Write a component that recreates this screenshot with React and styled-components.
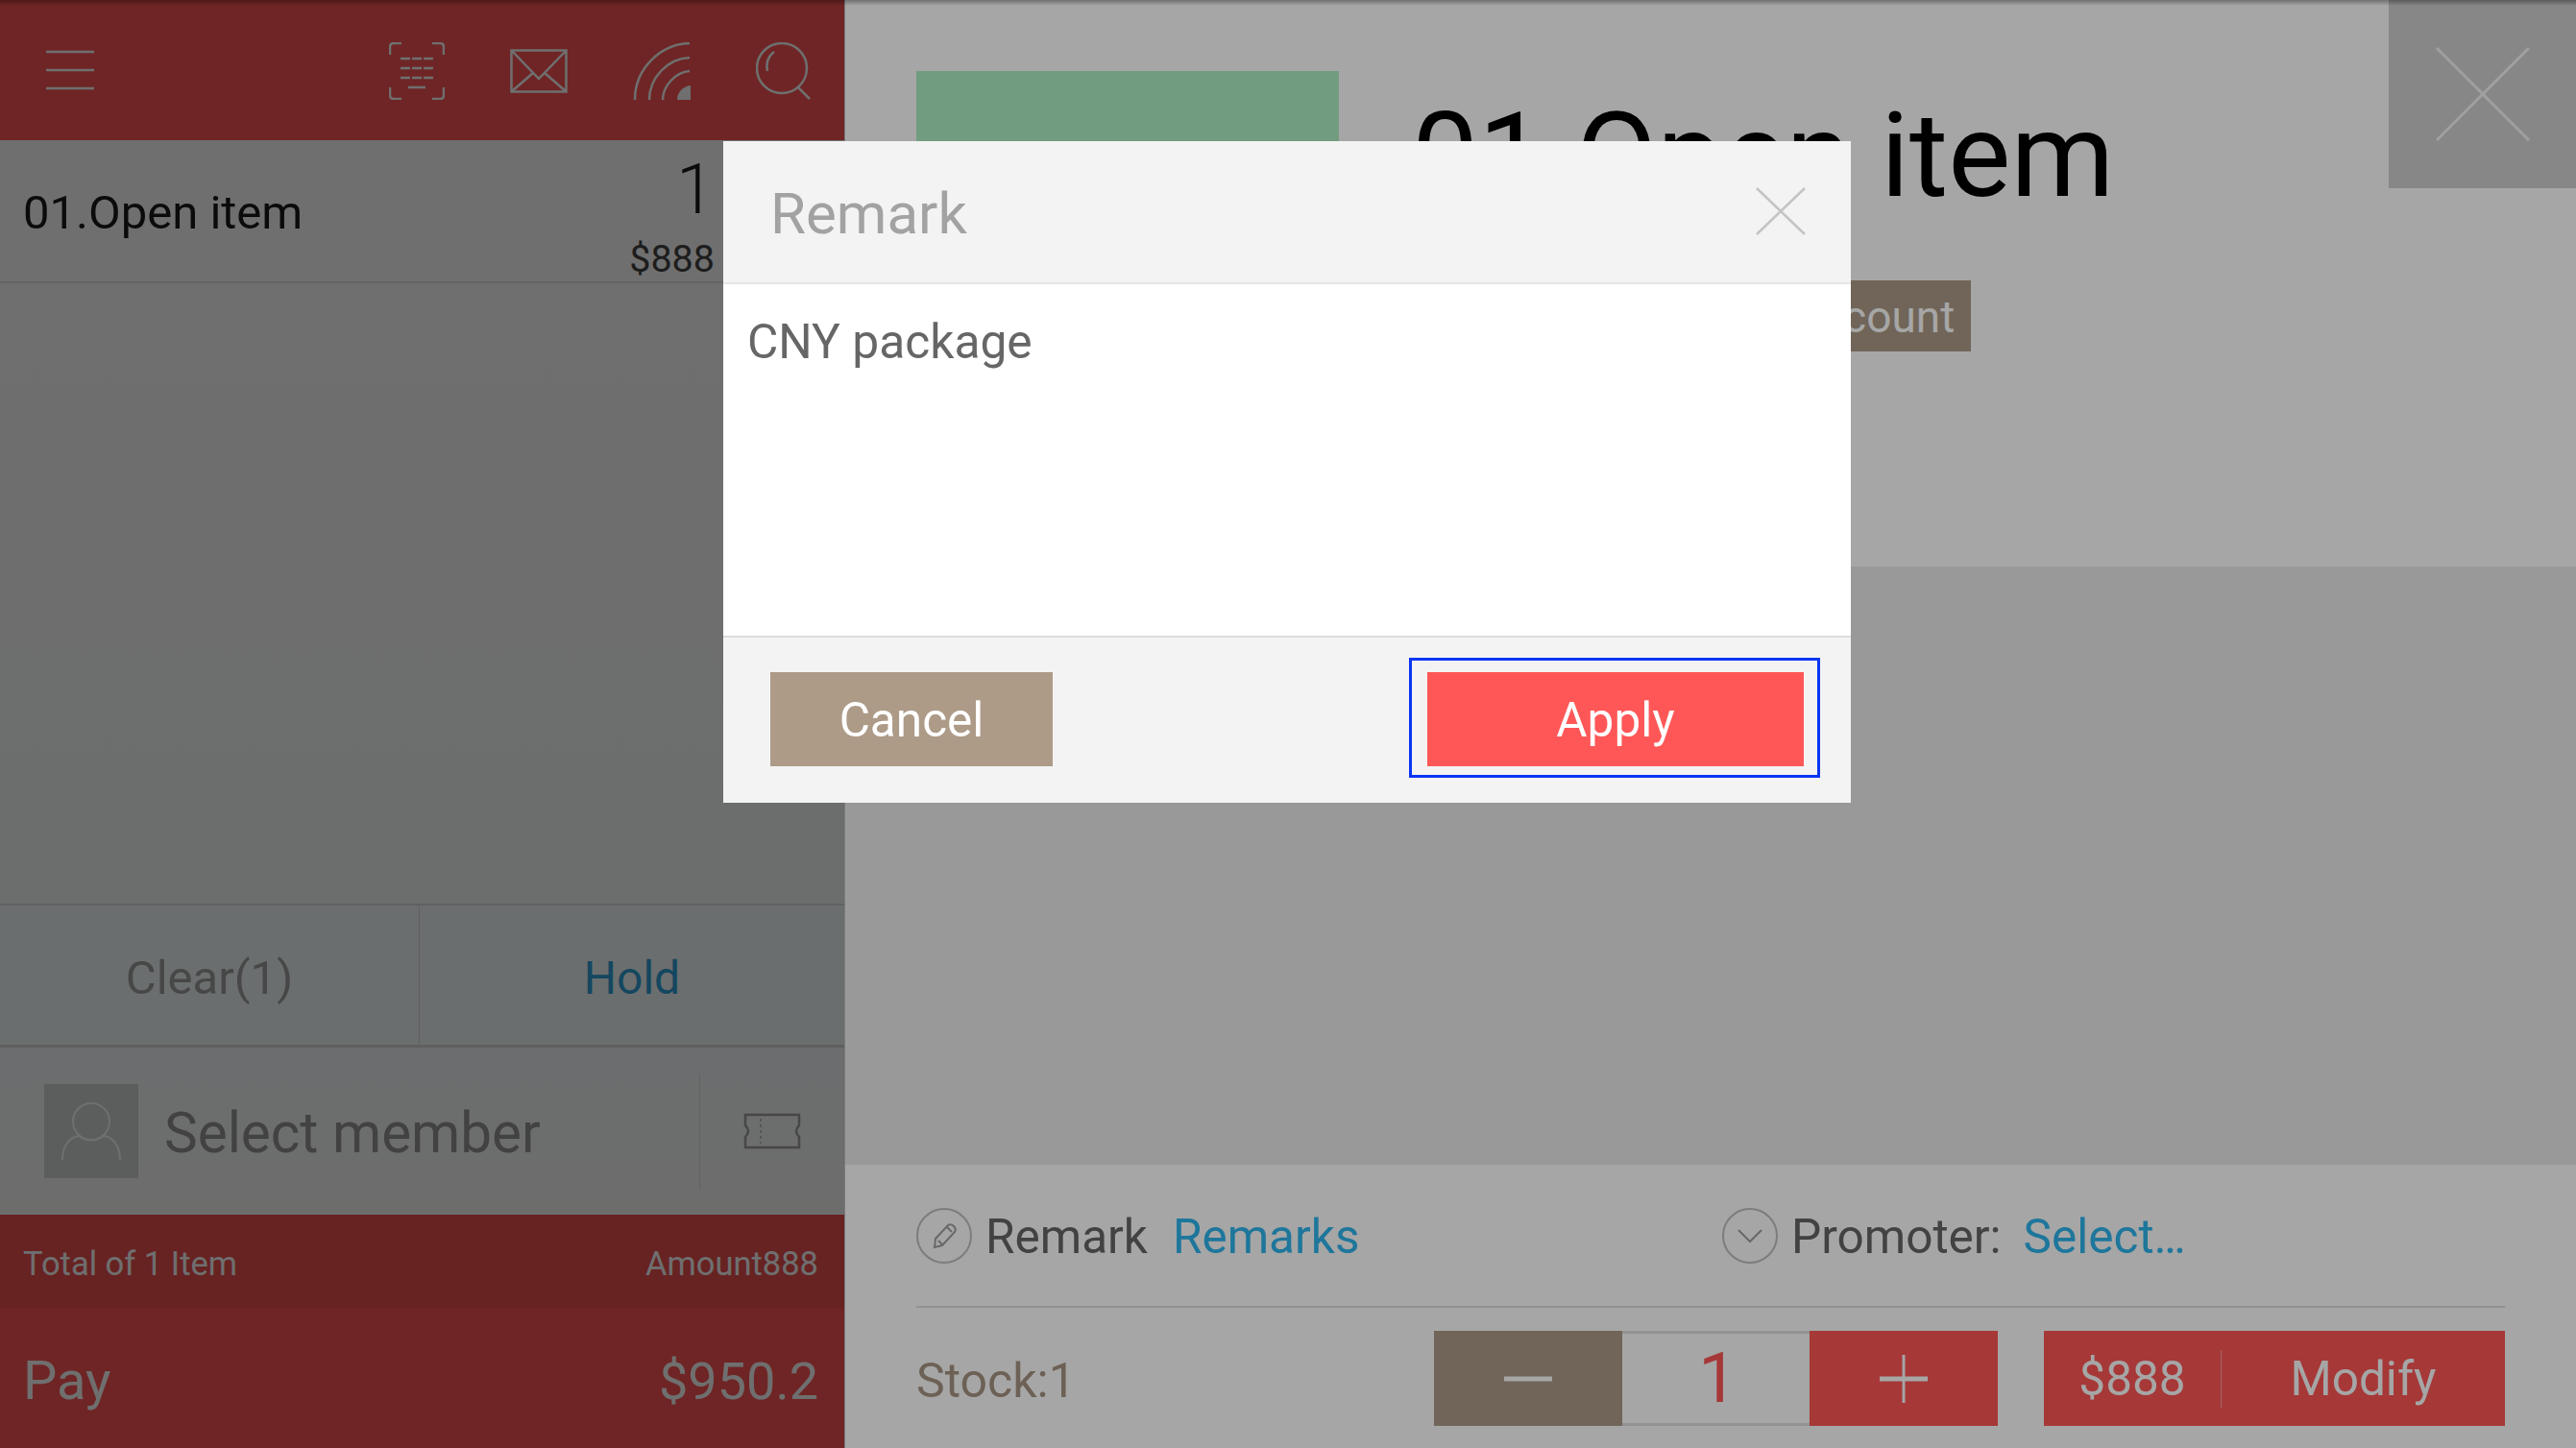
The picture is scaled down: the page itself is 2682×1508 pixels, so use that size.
import React from 'react'
import styled, { createGlobalStyle } from 'styled-components'

const Global = createGlobalStyle`
  html, body { margin: 0; padding: 0; background: #fff; }
  body { font-family: Roboto, "Liberation Sans", sans-serif; font-weight: 400; }
  * { box-sizing: border-box; }
`

const Screen = styled.div`
  position: relative;
  display: flex;
  width: 2682px;
  height: 1508px;
  overflow: hidden;
`

const Overlay = styled.div`
  position: absolute;
  inset: 0;
  background: ${p => p.$tint};
  pointer-events: none;
`

const StatusShade = styled.div`
  position: absolute;
  left: 0;
  right: 0;
  top: 0;
  height: 6px;
  background: linear-gradient(rgba(0,0,0,.32), rgba(0,0,0,0));
`

// left side, the cart
const Cart = styled.div`
  position: relative;
  width: 880px;
  height: 1508px;
  display: flex;
  flex-direction: column;
  background: #fff;
  border-right: 1px solid #bbb;
`

const TopBar = styled.div`
  height: 146px;
  background: #ff5757;
  display: flex;
  align-items: center;
  padding: 0 34px 0 48px;
  color: #fff;
  svg { display: block; fill: none; stroke: currentColor; stroke-width: 2.5; }
`

const BarIcons = styled.div`
  margin-left: auto;
  display: flex;
  gap: 68px;
  align-items: center;
  margin-top: 1px;
`

const CartRow = styled.div`
  height: 149px;
  border-bottom: 2px solid #e6e6e6;
  padding: 0 0 0 24px;
  display: flex;
  align-items: center;
  justify-content: space-between;
  font-size: 49px;
  color: #1c1c1c;
`

const RowName = styled.span`
  margin-top: 4px;
`

const RowNumbers = styled.div`
  width: 260px;
  padding-right: 135px;
  display: flex;
  flex-direction: column;
  align-items: flex-end;
  text-align: right;
`

const RowQty = styled.span`
  font-size: 72px;
  line-height: 78px;
  font-weight: 300;
  margin-top: 10px;
`

const RowPrice = styled.span`
  font-size: 39.5px;
  line-height: 40px;
  color: #444;
  margin-top: 13px;
`

const CartBody = styled.div`
  flex: 1;
  background: linear-gradient(#ffffff, #f9fcfd);
`

const ActionRow = styled.div`
  height: 150px;
  display: flex;
  border-top: 2px solid #e0e0e0;
  border-bottom: 3px solid #dadada;
  background: #f7fcfd;
`

const ActionBtn = styled.div`
  width: ${p => p.$width};
  padding-top: 6px;
  display: flex;
  align-items: center;
  justify-content: center;
  font-size: ${p => p.$size};
  color: ${p => p.$color};
  border-right: ${p => (p.$divided ? '1px solid #ddd' : '0')};
`

const MemberRow = styled.div`
  height: 174px;
  display: flex;
  align-items: center;
  padding-left: 46px;
  background: linear-gradient(#f8fbfc, #fbfbfa);
`

const Avatar = styled.div`
  width: 98px;
  height: 98px;
  background: #d4d5d5;
  display: flex;
  align-items: center;
  justify-content: center;
  svg { fill: none; stroke: #fff; stroke-width: 2; }
`

const MemberName = styled.div`
  flex: 1;
  margin-left: 27px;
  padding-top: 3px;
  font-size: 58.4px;
  color: #999;
`

const Coupon = styled.div`
  width: 151px;
  height: 120px;
  border-left: 1px solid #e0e0e0;
  display: flex;
  align-items: center;
  justify-content: center;
  color: #a3a3a3;
  svg { fill: none; stroke: currentColor; stroke-width: 2.5; }
`

const TotalRow = styled.div`
  height: 97px;
  background: #ee5050;
  display: flex;
  align-items: center;
  justify-content: space-between;
  padding: 5px 27px 0 24px;
  font-size: 34.5px;
  color: #fff;
`

const PayRow = styled.div`
  height: 146px;
  background: #ff5757;
  display: flex;
  align-items: center;
  justify-content: space-between;
  padding: 6px 27px 0 24px;
  font-size: 56px;
  color: #fff;
`

const PayAmount = styled.span`
  font-size: 54px;
`

// right side, the item drawer
const Drawer = styled.div`
  position: relative;
  flex: 1;
  display: flex;
  flex-direction: column;
  background: #ebebeb;
`

const ItemHead = styled.div`
  position: relative;
  height: 590px;
  background: #fff;
  display: flex;
  padding: 74px 0 0 74px;
`

const Thumb = styled.div`
  width: 440px;
  height: 440px;
  background: #aef0c4;
`

const ItemInfo = styled.div`
  margin-left: 76px;
  display: flex;
  flex-direction: column;
  align-items: flex-start;
`

const ItemTitle = styled.div`
  font-size: 123px;
  line-height: 140px;
  color: #000;
  margin-top: 18px;
`

const DiscountTag = styled.div`
  margin: 60px 0 0 368px;
  height: 74px;
  display: flex;
  align-items: center;
  padding: 2px 17px 0 16px;
  background: #ad9b88;
  color: #fff;
  font-size: 46px;
`

const CloseBox = styled.div`
  position: absolute;
  top: 0;
  right: 0;
  width: 195px;
  height: 196px;
  background: #d0d0d0;
  display: flex;
  align-items: center;
  justify-content: center;
  svg { stroke: #f6f6f6; stroke-width: 3; fill: none; }
`

const Spacer = styled.div`
  flex: 1;
`

const ItemFoot = styled.div`
  height: 295px;
  background: #fff;
  padding: 0 74px;
  display: flex;
  flex-direction: column;
`

const FootLinks = styled.div`
  height: 149px;
  display: flex;
  align-items: center;
  border-bottom: 2px solid #ddd;
`

const LinkGroup = styled.div`
  width: ${p => p.$width};
  display: flex;
  align-items: center;
  font-size: 49.5px;
`

const RoundIcon = styled.span`
  width: 58px;
  height: 58px;
  border-radius: 50%;
  border: 2px solid #c0c0c0;
  display: flex;
  align-items: center;
  justify-content: center;
  margin-right: 14px;
  svg { stroke: #a0a0a0; stroke-width: 2; fill: none; }
`

const LinkLabel = styled.span`
  color: #666;
  margin: 3px ${p => p.$gap} 0 0;
`

const LinkValue = styled.span`
  color: #2fb6ee;
  margin-top: 3px;
`

const StockRow = styled.div`
  flex: 1;
  display: flex;
  align-items: flex-start;
  padding-top: 24px;
`

const Stock = styled.div`
  flex: 1;
  color: #a89684;
  font-size: 50px;
  line-height: 104px;
`

const Stepper = styled.div`
  display: flex;
  height: 99px;
  margin-right: 48px;
`

const StepBtn = styled.div`
  width: 196px;
  background: ${p => p.$bg};
  display: flex;
  align-items: center;
  justify-content: center;
  svg { stroke: #fff; fill: none; }
`

const StepValue = styled.div`
  width: 195px;
  padding-left: 4px;
  background: #fff;
  border-top: 3px solid #e0e0e0;
  border-bottom: 3px solid #e0e0e0;
  display: flex;
  align-items: center;
  justify-content: center;
  color: #ff5757;
  font-size: 72px;
`

const PriceBtn = styled.div`
  width: 480px;
  height: 99px;
  padding-top: 1px;
  background: #ff5757;
  color: #fff;
  display: flex;
  align-items: center;
  font-size: 49.5px;
`

const PriceValue = styled.div`
  width: 185px;
  height: 60px;
  border-right: 1px solid #ffa0a0;
  display: flex;
  align-items: center;
  justify-content: center;
`

const PriceAction = styled.div`
  flex: 1;
  text-align: center;
`

// the remark dialog
const DialogLayer = styled.div`
  position: absolute;
  inset: 0;
  display: flex;
  justify-content: center;
  align-items: flex-start;
  padding: 147px 2px 0 0;
`

const Dialog = styled.div`
  position: relative;
  width: 1174px;
  height: 689px;
  background: #fff;
  display: flex;
  flex-direction: column;
`

const DialogHead = styled.div`
  height: 149px;
  background: #f3f3f3;
  border-bottom: 2px solid #e5e5e5;
  display: flex;
  align-items: center;
  justify-content: space-between;
  padding: 0 47px 2px 49px;
  color: #a2a2a2;
  font-size: 60px;
  svg { stroke: #c4c4c4; stroke-width: 2.5; fill: none; }
`

const DialogTitle = styled.span`
  padding-top: 5px;
`

const DialogBody = styled.div`
  flex: 1;
  padding: 30px 25px;
  color: #666;
  font-size: 49.7px;
  line-height: 60px;
`

const DialogFoot = styled.div`
  height: 174px;
  background: #f3f3f3;
  border-top: 2px solid #dcdcdc;
  display: flex;
  align-items: flex-start;
  justify-content: space-between;
  padding: 36px 32px 0 49px;
`

const DialogBtn = styled.div`
  width: ${p => p.$width};
  height: 98px;
  padding-top: 2px;
  background: ${p => p.$bg};
  color: #fff;
  display: flex;
  align-items: center;
  justify-content: center;
  font-size: 49.5px;
`

const FocusRing = styled.div`
  margin-top: -15px;
  padding: 12px 14px 9px 16px;
  border: 3px solid #0a35f5;
`

export default function App() {
  return (
    <Screen>
      <Global />
      <Cart>
        <TopBar>
          <svg width="50" height="42" viewBox="0 0 50 42">
            <path d="M0 2h50M0 21h50M0 40h50" />
          </svg>
          <BarIcons>
            <svg width="58" height="60" viewBox="0 0 58 60">
              <path d="M1 13V5q0-4 4-4h8M45 1h8q4 0 4 4v8M1 47v8q0 4 4 4h8M45 59h8q4 0 4-4v-8" />
              <path d="M12 17h34M12 27h34M12 37h34" strokeDasharray="10 2" />
              <path d="M20 47h18" />
            </svg>
            <svg width="60" height="46" viewBox="0 0 60 46">
              <path d="M1.5 1.5h57v43h-57zM1.5 1.5 30 31 58.5 1.5M1.5 44.5 24 25M58.5 44.5 36 25" />
            </svg>
            <svg width="60" height="60" viewBox="0 0 60 60">
              <path d="M2 60C2 28 28 2 59 1M17 60C17 37 36 17 59 16M31 60C31 45 45 31 59 30" />
              <path d="M46 60C46 52 52 46 60 45V60Z" fill="currentColor" stroke="none" />
            </svg>
            <svg width="58" height="60" viewBox="0 0 58 60">
              <circle cx="27" cy="27" r="26" />
              <path d="M44 47 56 59M12 30C10 22 13 14 19 10" />
            </svg>
          </BarIcons>
        </TopBar>
        <CartRow>
          <RowName>01.Open item</RowName>
          <RowNumbers>
            <RowQty>1</RowQty>
            <RowPrice>$888</RowPrice>
          </RowNumbers>
        </CartRow>
        <CartBody />
        <ActionRow>
          <ActionBtn $width="437px" $size="49px" $color="#a3a3a3" $divided>Clear(1)</ActionBtn>
          <ActionBtn $width="442px" $size="48px" $color="#2fa5dc">Hold</ActionBtn>
        </ActionRow>
        <MemberRow>
          <Avatar>
            <svg width="62" height="60" viewBox="0 0 62 60">
              <ellipse cx="31" cy="20" rx="19" ry="19" />
              <path d="M1 60C1 46 8 36 18 35 26 41 36 41 44 35 54 36 61 46 61 60" />
            </svg>
          </Avatar>
          <MemberName>Select member</MemberName>
          <Coupon>
            <svg width="60" height="38" viewBox="0 0 60 38">
              <path d="M2 2h56v11q-6 6 0 12v11H2V25q6-6 0-12z" />
              <path d="M18 6v26" strokeDasharray="3 3" strokeWidth="1.2" />
            </svg>
          </Coupon>
        </MemberRow>
        <TotalRow>
          <span>Total of 1 Item</span>
          <span>Amount888</span>
        </TotalRow>
        <PayRow>
          <span>Pay</span>
          <PayAmount>$950.2</PayAmount>
        </PayRow>
        <Overlay $tint="rgba(0,0,0,.33)" />
      </Cart>
      <Drawer>
        <ItemHead>
          <Thumb />
          <ItemInfo>
            <ItemTitle>01.Open item</ItemTitle>
            <DiscountTag>Discount</DiscountTag>
          </ItemInfo>
          <CloseBox>
            <svg width="98" height="98" viewBox="0 0 98 98">
              <path d="M1 1 97 97M97 1 1 97" />
            </svg>
          </CloseBox>
        </ItemHead>
        <Spacer />
        <ItemFoot>
          <FootLinks>
            <LinkGroup $width="839px">
              <RoundIcon>
                <svg width="32" height="32" viewBox="0 0 32 32">
                  <path d="M7 19 20 5q3-2 6 1t1 6L14 26l-8 2zM10 21l5 5M19 7l5 5" />
                </svg>
              </RoundIcon>
              <LinkLabel $gap="26px">Remark</LinkLabel>
              <LinkValue>Remarks</LinkValue>
            </LinkGroup>
            <LinkGroup>
              <RoundIcon>
                <svg width="28" height="16" viewBox="0 0 28 16">
                  <path d="M2 2 14 14 26 2" />
                </svg>
              </RoundIcon>
              <LinkLabel $gap="23px">Promoter:</LinkLabel>
              <LinkValue>Select…</LinkValue>
            </LinkGroup>
          </FootLinks>
          <StockRow>
            <Stock>Stock:1</Stock>
            <Stepper>
              <StepBtn $bg="#ad9b88">
                <svg width="50" height="6" viewBox="0 0 50 6"><path d="M0 3h50" strokeWidth="5" /></svg>
              </StepBtn>
              <StepValue>1</StepValue>
              <StepBtn $bg="#ff5757">
                <svg width="50" height="50" viewBox="0 0 50 50">
                  <path d="M0 25h50" strokeWidth="5" />
                  <path d="M25 0v50" strokeWidth="3" />
                </svg>
              </StepBtn>
            </Stepper>
            <PriceBtn>
              <PriceValue>$888</PriceValue>
              <PriceAction>Modify</PriceAction>
            </PriceBtn>
          </StockRow>
        </ItemFoot>
      </Drawer>
      <Overlay $tint="rgba(0,0,0,.35)" />
      <StatusShade />
      <DialogLayer>
        <Dialog>
          <DialogHead>
            <DialogTitle>Remark</DialogTitle>
            <svg width="52" height="50" viewBox="0 0 52 50">
              <path d="M1 1 51 49M51 1 1 49" />
            </svg>
          </DialogHead>
          <DialogBody>CNY package</DialogBody>
          <DialogFoot>
            <DialogBtn $width="294px" $bg="#ad9b88">Cancel</DialogBtn>
            <FocusRing>
              <DialogBtn $width="392px" $bg="#ff5757">Apply</DialogBtn>
            </FocusRing>
          </DialogFoot>
        </Dialog>
      </DialogLayer>
    </Screen>
  )
}
